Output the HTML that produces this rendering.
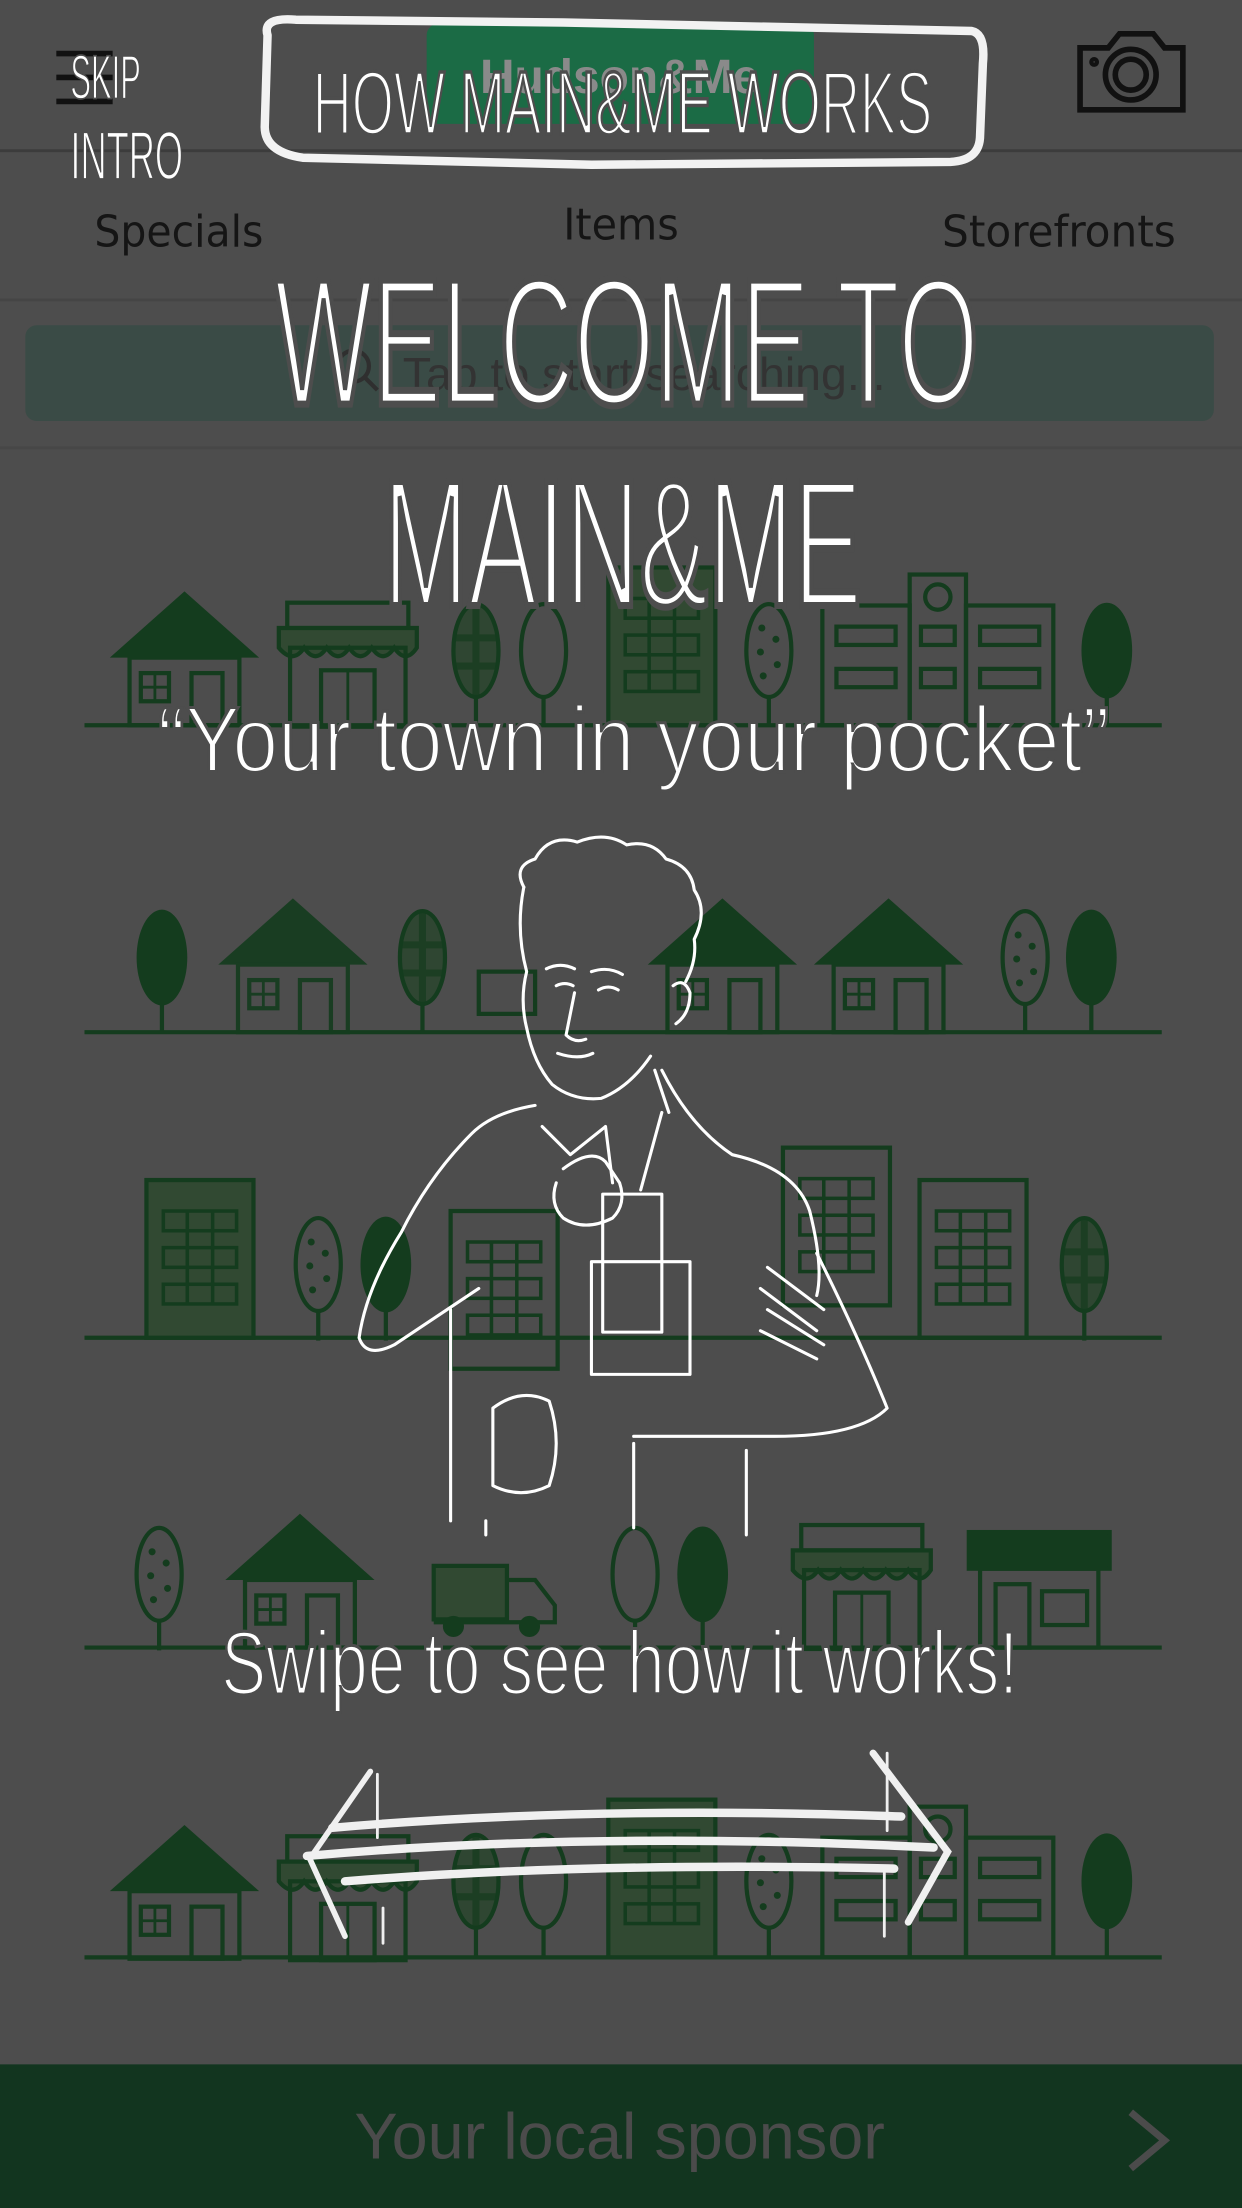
<!DOCTYPE html>
<html><head><meta charset="utf-8"><style>
html,body{margin:0;padding:0;background:#4d4d4d;}
svg{display:block}
</style></head><body>
<svg width="1242" height="2208" viewBox="0 0 882 1568" xmlns="http://www.w3.org/2000/svg">
<defs>
<g id="house"><path d="M0 47 L53 0 L106 47 Z" fill="#143c1e"/><rect x="14" y="47" width="78" height="48" fill="none" stroke="#143c1e" stroke-width="3"/><rect x="22" y="58" width="20" height="20" fill="none" stroke="#143c1e" stroke-width="3"/><path d="M32 58v20M22 68h20" stroke="#143c1e" stroke-width="2"/><rect x="58" y="58" width="22" height="37" fill="none" stroke="#143c1e" stroke-width="3"/></g>
<g id="treeF"><ellipse cx="18" cy="34" rx="18" ry="34" fill="#143c1e"/><path d="M18 60v28" stroke="#143c1e" stroke-width="3"/></g>
<g id="treeO"><ellipse cx="18" cy="34" rx="16" ry="33" fill="none" stroke="#143c1e" stroke-width="3"/><path d="M18 66v22" stroke="#143c1e" stroke-width="3"/></g>
<g id="treeD"><ellipse cx="18" cy="34" rx="16" ry="33" fill="none" stroke="#143c1e" stroke-width="3"/><g fill="#143c1e"><circle cx="13" cy="18" r="2.5"/><circle cx="23" cy="26" r="2.5"/><circle cx="12" cy="35" r="2.5"/><circle cx="24" cy="44" r="2.5"/><circle cx="14" cy="52" r="2.5"/></g><path d="M18 66v22" stroke="#143c1e" stroke-width="3"/></g>
<g id="treeC"><ellipse cx="18" cy="34" rx="16" ry="33" fill="#2f4632" stroke="#143c1e" stroke-width="3"/><path d="M18 2v64M3 25h30M3 45h30" stroke="#143c1e" stroke-width="5" opacity=".7"/><path d="M18 66v22" stroke="#143c1e" stroke-width="3"/></g>
<g id="bldg"><rect x="0" y="0" width="76" height="112" fill="#314932" stroke="#143c1e" stroke-width="3"/><g fill="none" stroke="#143c1e" stroke-width="2.5"><rect x="12" y="22" width="52" height="14"/><rect x="12" y="48" width="52" height="14"/><rect x="12" y="74" width="52" height="14"/><path d="M29 22v66M47 22v66"/></g></g>
<g id="bldgO"><rect x="0" y="0" width="76" height="112" fill="none" stroke="#143c1e" stroke-width="3"/><g fill="none" stroke="#143c1e" stroke-width="2.5"><rect x="12" y="22" width="52" height="14"/><rect x="12" y="48" width="52" height="14"/><rect x="12" y="74" width="52" height="14"/><path d="M29 22v66M47 22v66"/></g></g>
<g id="shop"><rect x="6" y="0" width="86" height="18" fill="none" stroke="#143c1e" stroke-width="3"/><path d="M0 18h98v14q-8 12-16 0q-8 12-16 0q-8 12-16 0q-8 12-16 0q-8 12-16 0q-8 12-18 0z" fill="#314932" stroke="#143c1e" stroke-width="3"/><rect x="8" y="32" width="82" height="56" fill="none" stroke="#143c1e" stroke-width="3"/><rect x="30" y="48" width="38" height="40" fill="none" stroke="#143c1e" stroke-width="3"/><path d="M49 48v40" stroke="#143c1e" stroke-width="2"/></g>
<g id="complex"><g fill="none" stroke="#143c1e" stroke-width="3"><rect x="0" y="22" width="62" height="85"/><rect x="62" y="0" width="40" height="107"/><rect x="102" y="22" width="62" height="85"/><circle cx="82" cy="16" r="9"/><rect x="10" y="37" width="42" height="13"/><rect x="10" y="67" width="42" height="13"/><rect x="70" y="37" width="24" height="13"/><rect x="70" y="67" width="24" height="13"/><rect x="112" y="37" width="42" height="13"/><rect x="112" y="67" width="42" height="13"/></g></g>
</defs>
<rect width="882" height="1568" fill="#4d4d4d"/>
<!-- header -->
<rect x="303" y="17" width="275" height="71" rx="8" fill="#1b6b45"/>
<text x="440" y="66" font-family="Liberation Sans, sans-serif" font-weight="bold" font-size="34" fill="#8a8a8a" text-anchor="middle">Hudson&amp;Me</text>
<path d="M0 107H882" stroke="#3c3c3c" stroke-width="2"/>
<path d="M40 38h40M40 55h40M40 72h40" stroke="#111" stroke-width="4"/>
<g fill="none" stroke="#111" stroke-width="4"><path d="M767 34h20l8-10h24l8 10h13v44h-73z"/><circle cx="803" cy="53" r="18"/><circle cx="803" cy="53" r="11"/><circle cx="777" cy="44" r="1.5"/></g>
<g font-family="DejaVu Sans Condensed, DejaVu Sans, sans-serif" font-size="31" fill="#151515" text-anchor="middle">
<text x="127" y="175" textLength="120" lengthAdjust="spacingAndGlyphs">Specials</text>
<text x="441" y="170" textLength="82" lengthAdjust="spacingAndGlyphs">Items</text>
<text x="752" y="175" textLength="166" lengthAdjust="spacingAndGlyphs">Storefronts</text>
</g>
<path d="M0 213H882" stroke="#454545" stroke-width="2"/>
<rect x="18" y="231" width="844" height="68" rx="8" fill="#3a4b46"/>
<circle cx="251" cy="260" r="11" fill="none" stroke="#2f2f2f" stroke-width="3"/><path d="M259 268l9 9" stroke="#2f2f2f" stroke-width="3"/>
<text x="286" y="277" font-family="Liberation Sans, sans-serif" font-size="33" fill="#333">Tap to start searching...</text>
<path d="M0 318H882" stroke="#474747" stroke-width="2"/>
<!-- town rows -->
<g stroke="#143c1e" stroke-width="3"><path d="M60 515H825M60 733H825M60 950H825M60 1170H825M60 1390H825"/></g>
<use href="#house" x="78" y="420"/><use href="#shop" x="198" y="428"/><use href="#treeC" x="320" y="428"/><use href="#treeO" x="368" y="428"/><use href="#bldg" x="432" y="403"/><use href="#treeD" x="528" y="428"/><use href="#complex" x="584" y="408"/><use href="#treeF" x="768" y="428"/>
<use href="#treeF" x="97" y="646"/><g opacity=".9"><use href="#house" x="155" y="638"/></g><use href="#treeC" x="282" y="646"/><rect x="340" y="690" width="40" height="30" fill="none" stroke="#143c1e" stroke-width="3"/><use href="#house" x="460" y="638"/><use href="#house" x="578" y="638"/><use href="#treeD" x="710" y="646"/><use href="#treeF" x="757" y="646"/>
<use href="#bldg" x="104" y="838"/><use href="#treeD" x="208" y="864"/><use href="#treeF" x="256" y="864"/><use href="#bldgO" x="320" y="860"/><use href="#bldgO" x="556" y="815"/><use href="#bldgO" x="653" y="838"/><use href="#treeC" x="752" y="864"/>
<use href="#treeD" x="95" y="1084"/><use href="#house" x="160" y="1075"/><g fill="none" stroke="#143c1e" stroke-width="3"><rect x="308" y="1112" width="52" height="38" fill="#314932"/><path d="M360 1122h20l14 18v12h-86"/><circle cx="322" cy="1155" r="6" fill="#143c1e"/><circle cx="376" cy="1155" r="6" fill="#143c1e"/></g><use href="#treeO" x="433" y="1084"/><use href="#treeF" x="481" y="1084"/><use href="#shop" x="563" y="1083"/><g fill="none" stroke="#143c1e" stroke-width="3"><rect x="688" y="1088" width="100" height="26" fill="#143c1e"/><rect x="696" y="1114" width="84" height="56"/><rect x="740" y="1130" width="32" height="24"/><rect x="707" y="1125" width="24" height="45"/></g>
<use href="#house" x="78" y="1296"/><use href="#shop" x="198" y="1304"/><use href="#treeC" x="320" y="1302"/><use href="#treeO" x="368" y="1302"/><use href="#bldg" x="432" y="1278"/><use href="#treeD" x="528" y="1302"/><use href="#complex" x="584" y="1283"/><use href="#treeF" x="768" y="1302"/>
<!-- overlay drawn box -->
<path d="M190 25 Q186 12 210 14 L400 16 L690 22 Q700 24 698 45 L696 96 Q696 114 675 115 L420 117 L215 112 Q188 108 188 90 Z" fill="none" stroke="#f2f2f2" stroke-width="6" stroke-linejoin="round"/>
<g font-family="Liberation Sans Narrow, Liberation Sans, sans-serif" fill="#fff" stroke="#4d4d4d" paint-order="fill">
<text x="222" y="95" font-size="64" stroke-width="2.5" textLength="440" lengthAdjust="spacingAndGlyphs">HOW MAIN&amp;ME WORKS</text>
<text x="50" y="70" font-size="44" stroke-width="1.2" textLength="50" lengthAdjust="spacingAndGlyphs">SKIP</text>
<text x="50" y="127" font-size="48" stroke-width="1.2" textLength="80" lengthAdjust="spacingAndGlyphs">INTRO</text>
<text x="195" y="287" font-size="128" stroke-width="5" textLength="500" lengthAdjust="spacingAndGlyphs">WELCOME TO</text>
<text x="272" y="430" font-size="128" stroke-width="5" textLength="340" lengthAdjust="spacingAndGlyphs">MAIN&amp;ME</text>
<text x="112" y="548" font-size="66" stroke-width="2.2" textLength="676" lengthAdjust="spacingAndGlyphs">“Your town in your pocket”</text>
<text x="157" y="1203" font-size="64" stroke-width="2.2" textLength="566" lengthAdjust="spacingAndGlyphs">Swipe to see how it works!</text>
</g>
<!-- man sketch -->
<g fill="none" stroke="#fff" stroke-width="2.2" stroke-linecap="round" stroke-linejoin="round">
<path d="M372 630q-8-15 8-20q10-18 30-12q20-8 35 2q18-4 28 10q18 5 20 22q10 15 0 35q2 15-6 30"/>
<path d="M372 630q-6 30 2 60q-5 20 0 40q5 25 18 40q15 12 35 10q20-8 35-30"/>
<path d="M478 700q8-6 12 5q0 15-10 22"/>
<path d="M388 688q10-5 20 0M420 690q12-4 22 2M395 700q6-3 12 0M425 703q7-4 14 0M408 705l-6 30q6 6 14 3M396 748q15 5 25 0"/>
<path d="M465 760l10 30M470 760q20 40 50 60q45 10 55 40q10 40 5 60"/>
<path d="M380 785q-30 5-45 20q-30 30-50 70q-25 40-30 75q5 15 25 5q30-20 60-40"/>
<path d="M385 800l20 20 25-20M430 800l5 40M470 790l-15 55"/>
<path d="M400 830q20-15 30-5l10 15q5 15-5 25q-20 10-35 0q-10-10-5-25"/>
<path d="M428 848h42v98h-42z M420 896h70v80h-70z"/>
<path d="M320 930q0 80 0 150M580 890q30 60 50 110q-20 20-80 20l-100 0"/>
<path d="M350 1000q20-15 40-5q10 30 0 60q-20 10-40 0z"/>
<path d="M545 900l40 30M540 915l40 30M545 930l40 25M540 945l40 20"/>
<path d="M345 1080v10M450 1025v60M530 1030v60"/>
</g>
<!-- arrow -->
<g fill="none" stroke="#f0f0f0" stroke-linecap="round">
<path d="M236 1298Q420 1282 640 1290" stroke-width="6"/>
<path d="M218 1318Q420 1300 663 1312" stroke-width="6"/>
<path d="M245 1336Q420 1322 635 1327" stroke-width="6"/>
<path d="M263 1258L220 1320L245 1375" stroke-width="4"/>
<path d="M620 1245L673 1315L645 1365" stroke-width="5"/>
<path d="M268 1260v45M272 1355v25M630 1245v55M628 1330v45" stroke-width="2"/>
</g>
<!-- bottom bar -->
<rect x="0" y="1466" width="882" height="102" fill="#12351f"/>
<text x="440" y="1533" font-family="Liberation Sans, sans-serif" font-size="46" fill="#4b4b4b" text-anchor="middle">Your local sponsor</text>
<path d="M803 1500l24 20-24 20" fill="none" stroke="#4b4b4b" stroke-width="5"/>
</svg>
</body></html>
